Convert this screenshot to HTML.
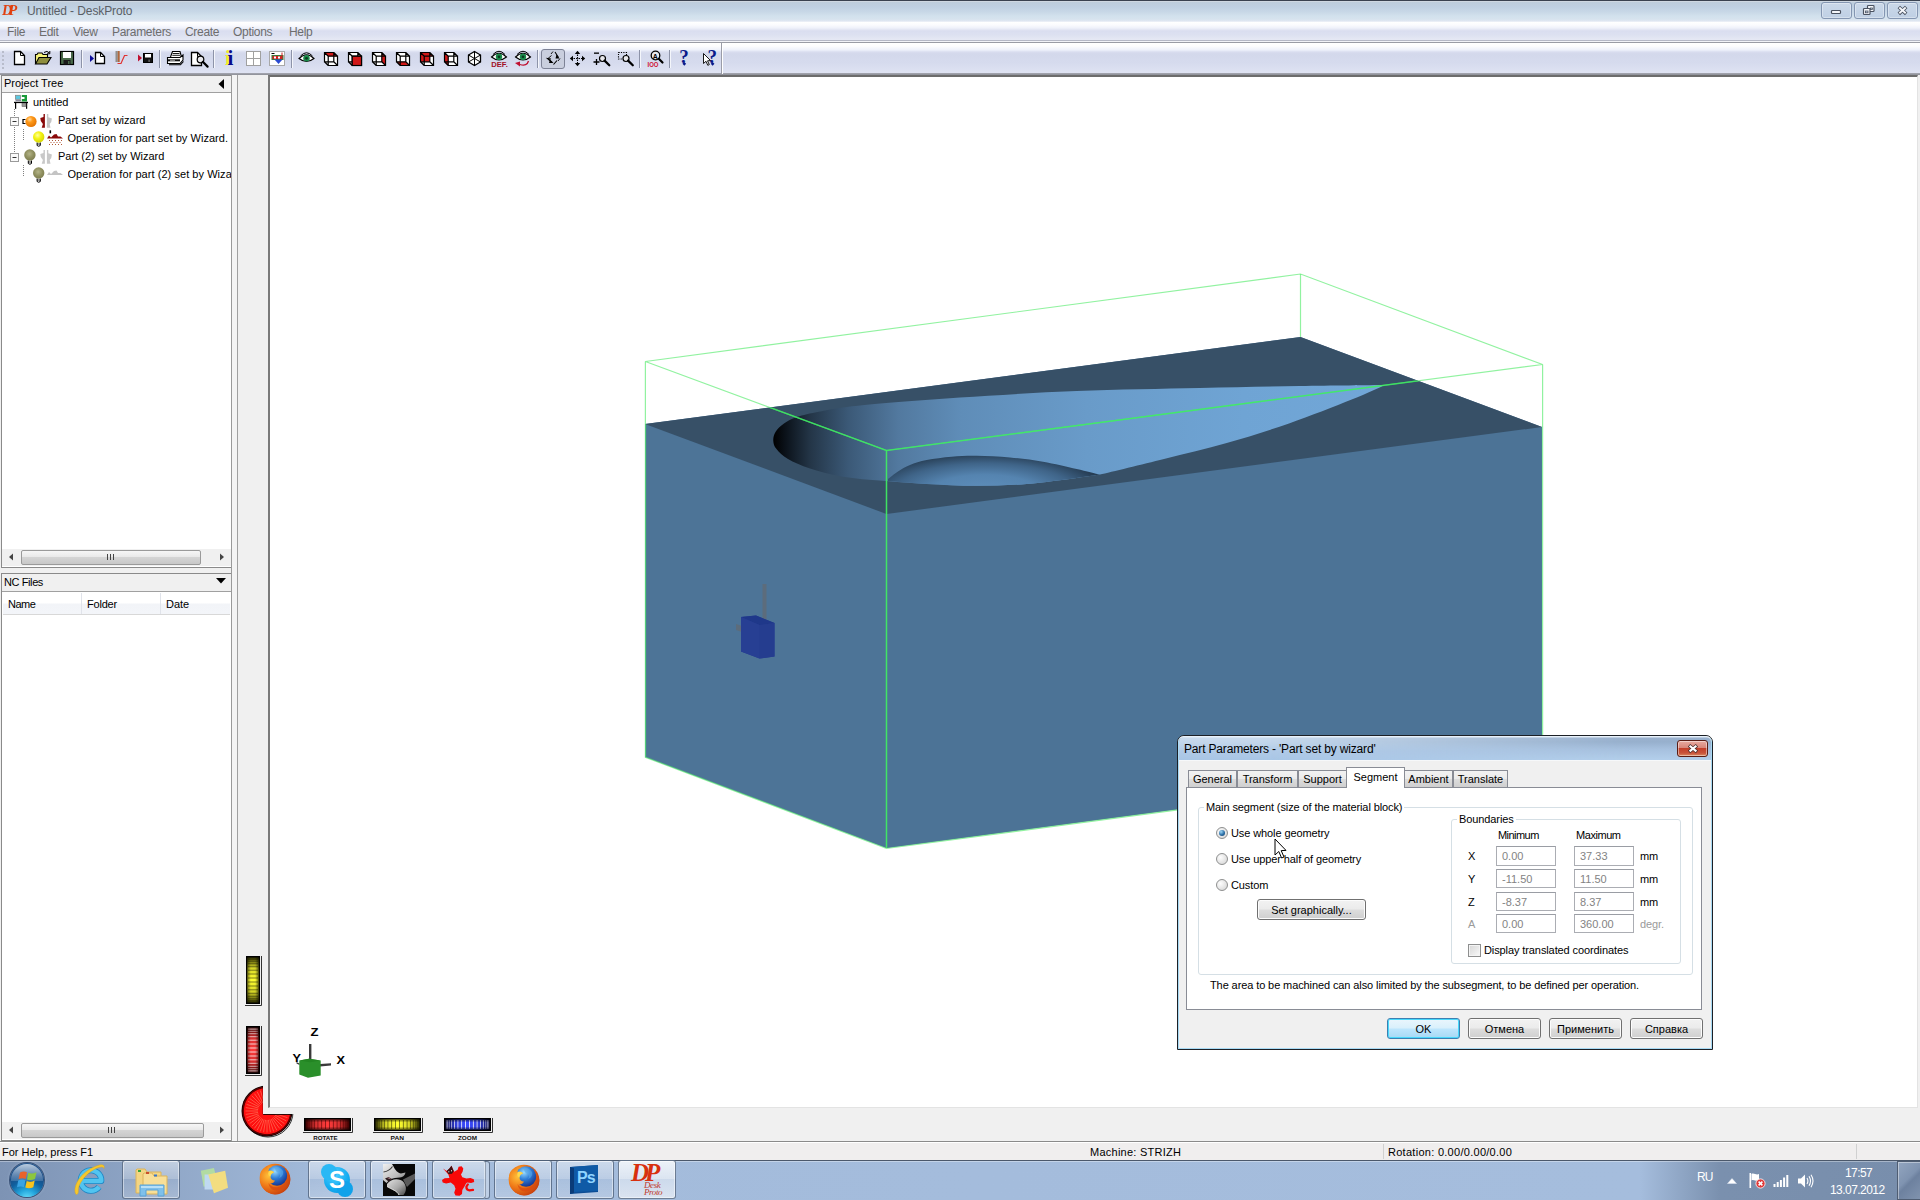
<!DOCTYPE html>
<html>
<head>
<meta charset="utf-8">
<title>Untitled - DeskProto</title>
<style>
html,body{margin:0;padding:0;}
body{width:1920px;height:1200px;position:relative;overflow:hidden;background:#f0f0f0;font-family:"Liberation Sans",sans-serif;font-size:11px;color:#000;}
.a{position:absolute;}
.t{position:absolute;white-space:nowrap;line-height:1;}
#titlebar{left:0;top:0;width:1920px;height:22px;background:linear-gradient(#3a4250 0,#3a4250 1px,#cfd8e2 1px,#cfd8e2 2px,#becddc 2px,#bfd0e2 7px,#c8d8e7 12px,#d2e1ed 16px,#d6e3ee 19px,#e0e6f1 21px,#f4f6fb 22px);}
#menubar{left:0;top:22px;width:1920px;height:21px;background:linear-gradient(#ffffff 0,#fbfbfe 3px,#eff1fa 6px,#e0e3f2 8px,#dadef0 9px,#dde1f1 13px,#e6e9f4 18px,#b5b8c6 18px,#b5b8c6 19px,#f2f3f8 19px,#f2f3f8 20px,#9a9ca5 20px,#9a9ca5 21px);}
#toolbar{left:0;top:43px;width:1920px;height:32px;background:linear-gradient(#ffffff 0,#fdfdfe 3px,#eef1fb 7px,#d9ddef 9px,#d3d8eb 11px,#d6dbee 20px,#dfe3f3 30px,#a6a8b2 30px,#8c8e96 32px);}
.menu{top:26px;font-size:12px;color:#6d6d6d;letter-spacing:-0.3px;}
#statusbar{left:0;top:1142px;width:1920px;height:18px;background:#f0eeee;}
#taskbar{left:0;top:1160px;width:1920px;height:40px;background:linear-gradient(90deg,#7d93b4 0,#a3bbdb 330px,#a5bddd 1640px,#7a90ae 1720px,#788eac 1920px);}
.sbthumb{border:1px solid #9a9a9a;border-radius:2px;background:linear-gradient(#f6f6f6 0,#e9e9e9 45%,#d4d4d4 50%,#c8c8c8 100%);}
.grip{width:7px;height:6px;background:linear-gradient(90deg,#444 0,#444 1px,transparent 1px,transparent 3px,#444 3px,#444 4px,transparent 4px,transparent 6px,#444 6px,#444 7px);}
.tab{position:absolute;top:34px;height:17px;box-sizing:border-box;border:1px solid #898c95;border-bottom:none;background:linear-gradient(#f2f2f2 0,#ebebeb 50%,#dddddd 50%,#cfcfcf 100%);text-align:center;line-height:16px;white-space:nowrap;}
.tab.sel{top:31px;height:21px;background:#fff;line-height:18px;}
.grp{position:absolute;box-sizing:border-box;border:1px solid #d5dfe5;border-radius:3px;}
.radio{position:absolute;width:12px;height:12px;box-sizing:border-box;border:1px solid #8e8f8f;border-radius:50%;background:radial-gradient(circle at 35% 35%,#fdfdfd 0,#e3e3e3 60%,#cfcfcf 100%);}
.radio i{position:absolute;left:2px;top:2px;width:6px;height:6px;border-radius:50%;background:radial-gradient(circle at 35% 30%,#9fd7f7 0,#2a6ea6 55%,#123d66 100%);}
.btn{position:absolute;box-sizing:border-box;border:1px solid #707070;border-radius:3px;background:linear-gradient(#f2f2f2 0,#ebebeb 48%,#dddddd 52%,#cfcfcf 100%);box-shadow:inset 0 0 0 1px #fcfcfc;text-align:center;white-space:nowrap;}
.btn{line-height:20px;}
#dlg .t{letter-spacing:-0.1px;}
.btn.def{border-color:#3c7fb1;box-shadow:inset 0 0 0 1px #48d8fb;background:linear-gradient(#eaf6fd 0,#d9f0fc 48%,#bee6fd 52%,#a7d9f5 100%);}
.inp{position:absolute;width:60px;height:20px;box-sizing:border-box;border:1px solid #abadb3;border-top-color:#9a9da4;background:#fff;color:#838383;line-height:18px;padding-left:5px;}
.tbb{position:absolute;top:1160px;height:39px;box-sizing:border-box;border:1px solid rgba(70,88,115,.75);border-radius:3px;background:linear-gradient(rgba(255,255,255,.45) 0,rgba(255,255,255,.25) 50%,rgba(255,255,255,.08) 50%,rgba(255,255,255,.2) 100%);box-shadow:inset 0 0 0 1px rgba(255,255,255,.45);}
.tbb.act{background:linear-gradient(rgba(255,255,255,.8) 0,rgba(255,255,255,.6) 50%,rgba(255,255,255,.45) 50%,rgba(255,255,255,.6) 100%);}
.wbtn{position:absolute;top:2px;width:31px;height:17px;box-sizing:border-box;border:1px solid #8496b2;border-radius:3px;background:linear-gradient(#cbd8e9,#bfd0e4);box-shadow:inset 0 0 0 1px rgba(255,255,255,.35);}
</style>
</head>
<body>
<div id="titlebar" class="a"></div>
<div class="t" style="left:27px;top:5px;font-size:12px;color:#5a5f66;letter-spacing:-0.1px;">Untitled - DeskProto</div>
<div class="wbtn" style="left:1821px;"></div><div class="wbtn" style="left:1854px;"></div><div class="wbtn" style="left:1887px;"></div>
<svg class="a" style="left:1821px;top:2px;" width="100" height="17" viewBox="1821 2 100 17">
<rect x="1831.500" y="10.500" width="9" height="3" rx=".8" fill="#f4f6fa" stroke="#4a5260" stroke-width="1.200"/>
<rect x="1867.500" y="5.500" width="6.500" height="6" rx=".8" fill="#f4f6fa" stroke="#4a5260" stroke-width="1.200"/><rect x="1870.500" y="8" width="2" height="1.500" fill="#c4d3e6" stroke="#4a5260" stroke-width=".8"/>
<rect x="1863.500" y="8.500" width="6.500" height="6" rx=".8" fill="#f4f6fa" stroke="#4a5260" stroke-width="1.200"/><rect x="1865.500" y="11" width="2.500" height="1.800" fill="#c4d3e6" stroke="#4a5260" stroke-width=".8"/>
<path d="M1898.800 7 L1906.200 13.800 M1906.200 7 L1898.800 13.800" stroke="#4a5260" stroke-width="3.600" stroke-linecap="butt"/><path d="M1899.300 7.500 L1905.700 13.300 M1905.700 7.500 L1899.300 13.300" stroke="#f4f6fa" stroke-width="1.900" stroke-linecap="butt"/>
</svg>
<div class="t" style="left:2px;top:3px;font-family:'Liberation Serif',serif;font-style:italic;font-weight:bold;font-size:15px;color:#e0400f;letter-spacing:-4px;transform:scaleX(.95);transform-origin:left;">DP</div>
<div id="menubar" class="a"></div>
<div class="t menu" style="left:7px;">File</div>
<div class="t menu" style="left:39px;">Edit</div>
<div class="t menu" style="left:73px;">View</div>
<div class="t menu" style="left:112px;">Parameters</div>
<div class="t menu" style="left:185px;">Create</div>
<div class="t menu" style="left:233px;">Options</div>
<div class="t menu" style="left:289px;">Help</div>
<div id="toolbar" class="a"></div>
<svg class="a" style="left:0;top:42px;" width="1920" height="33" viewBox="0 42 1920 33"><rect x="721" y="43" width="1" height="31" fill="#9a9ca8"/><rect x="722" y="43" width="1" height="31" fill="#fff"/><rect x="2" y="51" width="2" height="2" fill="#b8bccb"/><rect x="2" y="55" width="2" height="2" fill="#b8bccb"/><rect x="2" y="59" width="2" height="2" fill="#b8bccb"/><rect x="2" y="63" width="2" height="2" fill="#b8bccb"/><rect x="2" y="67" width="2" height="2" fill="#b8bccb"/><path d="M14.5 51.5 H20.5 L24.5 55.5 V64.5 H14.5 Z" fill="#fff" stroke="#000" stroke-width="1.3"/><path d="M20.5 51.5 V55.5 H24.5" fill="none" stroke="#000" stroke-width="1"/><path d="M35.5 64 V54.5 H37 L38 53 H42 L43 54.5 H47.5 V57" fill="#f6f27a" stroke="#000" stroke-width="1.1"/><path d="M35.5 64 L39 57.5 H51 L47 64 Z" fill="#8e8e3e" stroke="#000" stroke-width="1.1"/><path d="M44 52.5 Q47 50 49.5 53 M49.8 51 V53.8 H47" fill="none" stroke="#000" stroke-width="1"/><rect x="60.5" y="51.5" width="13" height="13" fill="#4a6a4a" stroke="#000" stroke-width="1.2"/><rect x="63" y="52" width="8" height="6" fill="#fff"/><rect x="63.5" y="60" width="7" height="4.5" fill="#1a1a1a"/><rect x="68" y="61" width="1.5" height="3" fill="#4a6a4a"/><rect x="81" y="50" width="1" height="18" fill="#8d93a8"/><rect x="82" y="50" width="1" height="18" fill="#f4f6fb"/><polygon points="90,55 94,58.5 90,62" fill="#0a0a9a"/><path d="M95.5 52.5 H100.5 L104.5 56.5 V63.5 H95.5 Z" fill="#fff" stroke="#000" stroke-width="1.3"/><path d="M100.5 52.5 V56.5 H104.5" fill="none" stroke="#000" stroke-width="1"/><rect x="115.5" y="51" width="2.2" height="11" fill="#8e8e8e"/><rect x="117.7" y="51" width="2" height="11" fill="#b0663a"/><path d="M117.5 63.5 H121 L124.5 55.5 H127.5" fill="none" stroke="#e03030" stroke-width="1.2"/><polygon points="138,54.5 142,58 138,61.5" fill="#c01030"/><rect x="143.5" y="53.5" width="9" height="9" fill="#111" stroke="#000" stroke-width="1"/><rect x="145" y="54" width="6" height="3.5" fill="#fff"/><rect x="148.500" y="59.5" width="1.2" height="2.5" fill="#777"/><rect x="159" y="50" width="1" height="18" fill="#8d93a8"/><rect x="160" y="50" width="1" height="18" fill="#f4f6fb"/><path d="M170.500 57 L172.500 51.500 H180 L181.500 57" fill="#fff" stroke="#000" stroke-width="1.1"/><path d="M172.700 53.500 H179.500 M172.300 55.300 H180" stroke="#000" stroke-width=".9"/><path d="M167.500 57.500 H180 L183 55 V60 L180 63.500 H167.500 Z" fill="#fff" stroke="#000" stroke-width="1.1"/><rect x="167.500" y="59.300" width="12.5" height="2" fill="#111"/><path d="M169 64.800 H180.500 L183.500 61.500" fill="none" stroke="#000" stroke-width="1.1"/><rect x="170" y="59.800" width="5" height=".8" fill="#ccc"/><path d="M191.5 52.5 H197.5 L201.5 56.5 V65.5 H191.5 Z" fill="#fff" stroke="#000" stroke-width="1.3"/><path d="M197.5 52.5 V56.5 H201.5" fill="none" stroke="#000" stroke-width="1"/><circle cx="200.5" cy="59.5" r="3.3" fill="#e8e8ec" stroke="#000" stroke-width="1.2"/><path d="M202.81 61.81 L207.60000000000002 66.6" stroke="#000" stroke-width="2.2" stroke-linecap="round"/><rect x="213" y="50" width="1" height="18" fill="#8d93a8"/><rect x="214" y="50" width="1" height="18" fill="#f4f6fb"/><text x="225" y="65.300" font-family="Liberation Serif, serif" font-weight="bold" font-size="21" fill="#f5f020">i</text><text x="227.600" y="65.300" font-family="Liberation Serif, serif" font-weight="bold" font-size="21" fill="#0a0a8a">i</text><rect x="246.500" y="51.500" width="14" height="14" fill="#fff" stroke="#a0a0a0" stroke-width="1"/><path d="M253.500 51.500 V65.500 M246.500 58.500 H260.500" stroke="#a0a0a0" stroke-width="1"/><rect x="269.500" y="51.500" width="15" height="14" fill="#fff" stroke="#a8a8a8" stroke-width="1"/><rect x="271.500" y="53" width="3" height="1" fill="#000"/><rect x="272" y="55.500" width="11" height="4" fill="#d02020" stroke="#3a7a3a" stroke-width="1"/><polygon points="274.500,59.500 282.500,59.500 278.500,64" fill="#2a4ad0"/><rect x="281.500" y="52.500" width="1" height="4" fill="#d02020"/><rect x="274" y="56.500" width="2" height="2" fill="#fff"/><rect x="278" y="56.500" width="2" height="2" fill="#fff"/><rect x="291" y="50" width="1" height="18" fill="#8d93a8"/><rect x="292" y="50" width="1" height="18" fill="#f4f6fb"/><g transform="translate(299 53.5)"><path d="M0 5 Q7.5 -2.5 15 5 Q7.5 11 0 5 Z" fill="#fff" stroke="#000" stroke-width="1.1"/><path d="M1.5 2.5 Q7.5 -4 13.5 2.5" fill="none" stroke="#000" stroke-width="1"/><circle cx="7.5" cy="4.8" r="3.2" fill="#1a8a4a"/><circle cx="7.5" cy="4.8" r="1.4" fill="#0a3a1e"/></g><g transform="translate(324.5 52.5) scale(.93)"><polygon points="0,0 10,0 14,4 14,14 4,14 0,10" fill="#fff"/><polygon points="0,0 10,0 14,4 4,4" fill="#d01818"/><path d="M0 0 H10 V10 H0 Z M4 4 H14 V14 H4 Z M0 0 L4 4 M10 0 L14 4 M10 10 L14 14 M0 10 L4 14" fill="none" stroke="#000" stroke-width="1.3"/></g><g transform="translate(348.5 52.5) scale(.93)"><polygon points="0,0 10,0 14,4 14,14 4,14 0,10" fill="#fff"/><polygon points="4,4 14,4 14,14 4,14" fill="#d01818"/><path d="M0 0 H10 V10 H0 Z M4 4 H14 V14 H4 Z M0 0 L4 4 M10 0 L14 4 M10 10 L14 14 M0 10 L4 14" fill="none" stroke="#000" stroke-width="1.3"/><rect x="4" y="4" width="10" height="10" fill="#d01818" stroke="#000" stroke-width="1.3"/></g><g transform="translate(372.5 52.5) scale(.93)"><polygon points="0,0 10,0 14,4 14,14 4,14 0,10" fill="#fff"/><polygon points="10,0 14,4 14,14 10,10" fill="#d01818"/><path d="M0 0 H10 V10 H0 Z M4 4 H14 V14 H4 Z M0 0 L4 4 M10 0 L14 4 M10 10 L14 14 M0 10 L4 14" fill="none" stroke="#000" stroke-width="1.3"/></g><g transform="translate(396.5 52.5) scale(.93)"><polygon points="0,0 10,0 14,4 14,14 4,14 0,10" fill="#fff"/><polygon points="0,10 10,10 14,14 4,14" fill="#d01818"/><path d="M0 0 H10 V10 H0 Z M4 4 H14 V14 H4 Z M0 0 L4 4 M10 0 L14 4 M10 10 L14 14 M0 10 L4 14" fill="none" stroke="#000" stroke-width="1.3"/></g><g transform="translate(420.5 52.5) scale(.93)"><polygon points="0,0 10,0 14,4 14,14 4,14 0,10" fill="#fff"/><polygon points="0,0 10,0 10,10 0,10" fill="#d01818"/><polygon points="0,0 10,0 14,4 4,4" fill="#d01818"/><path d="M0 0 H10 V10 H0 Z M4 4 H14 V14 H4 Z M0 0 L4 4 M10 0 L14 4 M10 10 L14 14 M0 10 L4 14" fill="none" stroke="#000" stroke-width="1.3"/></g><g transform="translate(444.5 52.5) scale(.93)"><polygon points="0,0 10,0 14,4 14,14 4,14 0,10" fill="#fff"/><polygon points="0,0 4,4 4,14 0,10" fill="#d01818"/><path d="M0 0 H10 V10 H0 Z M4 4 H14 V14 H4 Z M0 0 L4 4 M10 0 L14 4 M10 10 L14 14 M0 10 L4 14" fill="none" stroke="#000" stroke-width="1.3"/></g><polygon points="474.500,51.500 480.500,55 480.500,62 474.500,65.500 468.500,62 468.500,55" fill="#fff" stroke="#000" stroke-width="1.3"/><path d="M474.500 51.500 V65.500 M468.500 55 L480.500 62 M480.500 55 L468.500 62" stroke="#000" stroke-width="1"/><g transform="translate(491.5 52)"><path d="M0 5 Q7.5 -2.5 15 5 Q7.5 11 0 5 Z" fill="#fff" stroke="#000" stroke-width="1.1"/><path d="M1.5 2.5 Q7.5 -4 13.5 2.5" fill="none" stroke="#000" stroke-width="1"/><circle cx="7.5" cy="4.8" r="3.2" fill="#1a8a4a"/><circle cx="7.5" cy="4.8" r="1.4" fill="#0a3a1e"/></g><text x="491.300" y="66.800" font-family="Liberation Sans, sans-serif" font-weight="bold" font-size="7.5" fill="#a01028" textLength="16.500" lengthAdjust="spacingAndGlyphs">DEF.</text><g transform="translate(515.5 52)"><path d="M0 5 Q7.5 -2.5 15 5 Q7.5 11 0 5 Z" fill="#fff" stroke="#000" stroke-width="1.1"/><path d="M1.5 2.5 Q7.5 -4 13.5 2.5" fill="none" stroke="#000" stroke-width="1"/><circle cx="7.5" cy="4.8" r="3.2" fill="#1a8a4a"/><circle cx="7.5" cy="4.8" r="1.4" fill="#0a3a1e"/></g><path d="M520 64.500 Q527 66.500 528.500 61" fill="none" stroke="#c01030" stroke-width="1.3"/><polygon points="515,63 520,61.500 520,66.500" fill="#c01030"/><rect x="537" y="50" width="1" height="18" fill="#8d93a8"/><rect x="538" y="50" width="1" height="18" fill="#f4f6fb"/><rect x="541.500" y="49.500" width="23" height="19" rx="2.500" fill="#c9cede" stroke="#7d8296" stroke-width="1"/><path d="M555 52 L558.500 57.500 M551 59 L547.500 58.500 L552 62.500 M553.500 64.500 L557 60.500" fill="none" stroke="#000" stroke-width="1.1"/><polygon points="556.500,54.500 559.500,58.500 555.500,58.500" fill="#000"/><polygon points="550,59.500 553.500,63 549,63" fill="#000"/><path d="M553 51.500 L551 54 M548 58.500 L551.500 55.500 M558 61 L560 58.500" stroke="#000" stroke-width=".9"/><path d="M577.500 52 V65 M571 58.500 H584" stroke="#000" stroke-width="1.1" stroke-dasharray="1.5 1"/><polygon points="577.500,50.800 580.200,54 574.800,54" fill="#000"/><polygon points="577.500,66.200 580.200,63 574.800,63" fill="#000"/><polygon points="569.800,58.500 573,55.800 573,61.200" fill="#000"/><polygon points="585.200,58.500 582,55.800 582,61.200" fill="#000"/><rect x="594" y="52.500" width="5" height="1.300" fill="#000"/><path d="M593.500 62 H599.500 M596.500 59 V65" stroke="#000" stroke-width="1.3"/><circle cx="602.5" cy="58.5" r="3" fill="#e8e8ec" stroke="#000" stroke-width="1.2"/><path d="M604.6 60.6 L609.3 65.3" stroke="#000" stroke-width="2.2" stroke-linecap="round"/><rect x="618.500" y="52.500" width="8" height="6.500" fill="none" stroke="#000" stroke-width="1.1" stroke-dasharray="1.2 1.2"/><circle cx="626" cy="58.5" r="3" fill="#e8e8ec" stroke="#000" stroke-width="1.2"/><path d="M628.1 60.6 L632.8 65.3" stroke="#000" stroke-width="2.2" stroke-linecap="round"/><rect x="639" y="50" width="1" height="18" fill="#8d93a8"/><rect x="640" y="50" width="1" height="18" fill="#f4f6fb"/><circle cx="655.500" cy="55.500" r="4.300" fill="#e8e8ec" stroke="#000" stroke-width="1.300"/><path d="M658.800 58.800 L662.500 62.500" stroke="#000" stroke-width="2.200" stroke-linecap="round"/><text x="652.800" y="58.500" font-family="Liberation Sans, sans-serif" font-weight="bold" font-size="7" fill="#000">A</text><text x="647.500" y="66.500" font-family="Liberation Sans, sans-serif" font-size="7.500" fill="#d01030" font-weight="bold" textLength="11" lengthAdjust="spacingAndGlyphs">IOO</text><rect x="669" y="50" width="1" height="18" fill="#8d93a8"/><rect x="670" y="50" width="1" height="18" fill="#f4f6fb"/><text x="679.300" y="63" font-family="Liberation Serif, serif" font-weight="bold" font-size="19" fill="#0a1a8a">?</text><rect x="683" y="62.500" width="2.600" height="2.600" fill="#0a1a8a" transform="rotate(45 684.300 63.800)"/><text x="707.500" y="63" font-family="Liberation Serif, serif" font-weight="bold" font-size="19" fill="#0a1a8a">?</text><rect x="711.300" y="62.500" width="2.600" height="2.600" fill="#0a1a8a" transform="rotate(45 712.600 63.800)"/><path d="M703.500 53.500 V63.500 L706 61.300 L707.800 65.300 L709.300 64.600 L707.500 60.800 L710.500 60.500 Z" fill="#fff" stroke="#000" stroke-width=".9"/></svg>
<div class="a" style="left:0;top:75px;width:232px;height:1066px;background:#f0f0f0;"></div>
<div class="a" style="left:1px;top:75px;width:229px;height:491px;border:1px solid #8a8a8a;background:#fff;"></div>
<div class="a" style="left:2px;top:76px;width:229px;height:16px;background:#f0f0f0;border-bottom:1px solid #a0a0a0;"></div>
<div class="t" style="left:4px;top:78px;">Project Tree</div>
<svg class="a" style="left:216px;top:78px;" width="10" height="12"><path d="M8 1 L8 11 L2.5 6 Z" fill="#000"/></svg>
<div class="a" style="left:2px;top:549px;width:229px;height:17px;background:#f0f0f0;"></div>
<div class="a sbthumb" style="left:21px;top:550px;width:178px;height:13px;"></div>
<svg class="a" style="left:8px;top:553px;" width="6" height="8"><path d="M5 0.5 L5 7.5 L1 4 Z" fill="#444"/></svg>
<svg class="a" style="left:219px;top:553px;" width="6" height="8"><path d="M1 0.5 L1 7.5 L5 4 Z" fill="#444"/></svg>
<div class="a grip" style="left:107px;top:554px;"></div>
<div class="a" style="left:1px;top:573px;width:229px;height:566px;border:1px solid #8a8a8a;background:#fff;"></div>
<div class="a" style="left:2px;top:574px;width:229px;height:17px;background:#f0f0f0;border-bottom:1px solid #a0a0a0;"></div>
<div class="t" style="left:4px;top:577px;letter-spacing:-0.4px;">NC Files</div>
<svg class="a" style="left:215px;top:577px;" width="12" height="8"><path d="M1 1 L11 1 L6 6.5 Z" fill="#000"/></svg>
<div class="a" style="left:3px;top:593px;width:227px;height:21px;background:linear-gradient(#fff 0,#fff 10px,#f2f4f8 11px,#f3f5f9 21px);border-bottom:1px solid #d8d8d8;"></div>
<div class="a" style="left:81px;top:593px;width:1px;height:21px;background:#e0e3ea;"></div>
<div class="a" style="left:160px;top:593px;width:1px;height:21px;background:#e0e3ea;"></div>
<div class="t" style="left:8px;top:599px;letter-spacing:-0.5px;">Name</div>
<div class="t" style="left:87px;top:599px;letter-spacing:-0.2px;">Folder</div>
<div class="t" style="left:166px;top:599px;">Date</div>
<div class="a" style="left:2px;top:1122px;width:229px;height:17px;background:#f0f0f0;"></div>
<div class="a sbthumb" style="left:21px;top:1123px;width:181px;height:13px;"></div>
<svg class="a" style="left:8px;top:1126px;" width="6" height="8"><path d="M5 0.5 L5 7.5 L1 4 Z" fill="#444"/></svg>
<svg class="a" style="left:219px;top:1126px;" width="6" height="8"><path d="M1 0.5 L1 7.5 L5 4 Z" fill="#444"/></svg>
<div class="a grip" style="left:108px;top:1127px;"></div>
<!-- tree -->
<div class="t" style="left:33px;top:97px;">untitled</div>
<div class="t" style="left:58px;top:115px;">Part set by wizard</div>
<div class="t" style="left:67.5px;top:133px;letter-spacing:.05px;">Operation for part set by Wizard.</div>
<div class="t" style="left:58px;top:151px;">Part (2) set by Wizard</div>
<div class="t" style="left:67.5px;top:169px;width:163px;overflow:hidden;letter-spacing:.05px;">Operation for part (2) set by Wizard.</div>
<svg class="a" style="left:0;top:93px;" width="80" height="100" viewBox="0 93 80 100"><defs><radialGradient id="gor" cx=".38" cy=".32" r=".75"><stop offset="0" stop-color="#ffd9a0"/><stop offset=".35" stop-color="#ff9a1a"/><stop offset="1" stop-color="#e07000"/></radialGradient><radialGradient id="gye" cx=".4" cy=".35" r=".75"><stop offset="0" stop-color="#ffffa0"/><stop offset=".4" stop-color="#f4f416"/><stop offset="1" stop-color="#d0d000"/></radialGradient><radialGradient id="gol" cx=".45" cy=".4" r=".75"><stop offset="0" stop-color="#b4b488"/><stop offset=".5" stop-color="#8e8e5e"/><stop offset="1" stop-color="#76764a"/></radialGradient></defs><path d="M14.500 109 V153 M23.500 129 V141 M23.500 165 V177" stroke="#808080" stroke-width="1" stroke-dasharray="1 1"/><rect x="14" y="101.800" width="14" height="1.300" fill="#000"/><rect x="15" y="102" width="1.200" height="6.800" fill="#000"/><rect x="26" y="102" width="1.200" height="6.800" fill="#000"/><rect x="15.500" y="95.300" width="5" height="4" fill="#5ac8e0" stroke="#888" stroke-width=".8"/><rect x="15.500" y="99.800" width="5.500" height="1.500" fill="#8a8a9a"/><path d="M21.800 95 H27 V101.500 H21.800 V99 H24.500 V97 H21.800 Z" fill="#1a9a3a"/><rect x="22" y="103.500" width="4" height="3" fill="#9a9a9a" stroke="#666" stroke-width=".6"/><rect x="10.500" y="117.5" width="8" height="8" fill="#fafafa" stroke="#9a9a9a" stroke-width="1"/><rect x="12.500" y="121.0" width="4" height="1" fill="#333"/><rect x="10.500" y="153.5" width="8" height="8" fill="#fafafa" stroke="#9a9a9a" stroke-width="1"/><rect x="12.500" y="157.0" width="4" height="1" fill="#333"/><path d="M25.500 119.500 H23 V123.500 H25.500" fill="none" stroke="#000" stroke-width="1.200"/><circle cx="31" cy="121.500" r="5.600" fill="url(#gor)"/><path d="M43.5 114 H44.9 V127.7 H41.699999999999996 L42.9 124 Q40.0 121 40.3 118 L43.5 117 Z" fill="#8a0a0a"/><path d="M46.9 114 H48.3 V117.2 L51.9 118.6 Q51.9 122 49.699999999999996 124 L50.5 127.7 H46.9 Z" fill="#c4c4c4"/><circle cx="38.7" cy="137" r="5.7" fill="url(#gye)"/><path d="M37.1 142.6 V145.5 Q38.7 147 40.300000000000004 145.5 V142.6" fill="none" stroke="#000" stroke-width="1"/><path d="M37.1 144 H40.300000000000004" stroke="#000" stroke-width=".8"/><rect x="49.500" y="130.300" width="1.600" height="3" fill="#000"/><path d="M47 138.5 L49 135.5 L51 137.5 L54 134.5 L56.5 134.0 L58 136.5 L60.5 136.5 L63 138.5 Z" fill="#8a0a0a"/><rect x="49" y="140" width="1" height="1" fill="#b05a3a"/><rect x="52" y="140" width="1" height="1" fill="#b05a3a"/><rect x="55" y="140" width="1" height="1" fill="#b05a3a"/><rect x="58" y="140" width="1" height="1" fill="#b05a3a"/><rect x="61" y="140" width="1" height="1" fill="#b05a3a"/><rect x="50.5" y="142" width="1" height="1" fill="#b05a3a"/><rect x="53.5" y="142" width="1" height="1" fill="#b05a3a"/><rect x="56.5" y="142" width="1" height="1" fill="#b05a3a"/><rect x="59.5" y="142" width="1" height="1" fill="#b05a3a"/><rect x="49" y="144" width="1" height="1" fill="#b05a3a"/><rect x="52" y="144" width="1" height="1" fill="#b05a3a"/><rect x="55" y="144" width="1" height="1" fill="#b05a3a"/><rect x="58" y="144" width="1" height="1" fill="#b05a3a"/><rect x="61" y="144" width="1" height="1" fill="#b05a3a"/><circle cx="29.9" cy="155" r="5.7" fill="url(#gol)"/><path d="M28.299999999999997 160.6 V163.5 Q29.9 165 31.5 163.5 V160.6" fill="none" stroke="#000" stroke-width="1"/><path d="M28.299999999999997 162 H31.5" stroke="#000" stroke-width=".8"/><path d="M43.5 150 H44.9 V163.7 H41.699999999999996 L42.9 160 Q40.0 157 40.3 154 L43.5 153 Z" fill="#c8c8c8"/><path d="M46.9 150 H48.3 V153.2 L51.9 154.6 Q51.9 158 49.699999999999996 160 L50.5 163.7 H46.9 Z" fill="#c8c8c8"/><circle cx="38.7" cy="173" r="5.7" fill="url(#gol)"/><path d="M37.1 178.6 V181.5 Q38.7 183 40.300000000000004 181.5 V178.6" fill="none" stroke="#000" stroke-width="1"/><path d="M37.1 180 H40.300000000000004" stroke="#000" stroke-width=".8"/><path d="M47 175 L49 172 L51 174 L54 171 L56.5 170.5 L58 173 L60.5 173 L63 175 Z" fill="#c4c4c4"/></svg>

<div class="a" style="left:232px;top:75px;width:1688px;height:1066px;background:#f0f0f0;"></div>
<div class="a" style="left:231px;top:75px;width:1px;height:1066px;background:#9a9a9a;"></div>
<div class="a" style="left:232px;top:75px;width:5px;height:1066px;background:#f4f4f4;"></div>
<div class="a" style="left:237px;top:75px;width:1px;height:1066px;background:#a0a0a0;"></div>
<div class="a" style="left:268px;top:75px;width:1650px;height:1033px;background:#fff;border-left:2px solid #7a7a7a;border-top:2px solid #6c6c6c;border-right:1px solid #e3e3e3;border-bottom:1px solid #e3e3e3;box-sizing:border-box;"></div>
<svg class="a" style="left:232px;top:75px;" width="1688" height="1066" viewBox="232 75 1688 1066">
<defs>
<linearGradient id="gcav" gradientUnits="userSpaceOnUse" x1="773" y1="0" x2="1400" y2="0">
<stop offset="0" stop-color="#000000"/><stop offset="0.02" stop-color="#0b121a"/><stop offset="0.06" stop-color="#243648"/><stop offset="0.12" stop-color="#3b5977"/><stop offset="0.2" stop-color="#52799f"/><stop offset="0.3" stop-color="#5f8db8"/><stop offset="0.5" stop-color="#699bc9"/><stop offset="0.75" stop-color="#6fa4d4"/><stop offset="1" stop-color="#72a7d8"/>
</linearGradient>
<radialGradient id="gbump" gradientUnits="userSpaceOnUse" cx="985" cy="492" r="120" gradientTransform="translate(985 492) scale(1 0.32) translate(-985 -492)">
<stop offset="0" stop-color="#5f8fbc"/><stop offset="0.45" stop-color="#5584b0"/><stop offset="0.75" stop-color="#3f6488"/><stop offset="1" stop-color="#273e55"/>
</radialGradient>
</defs>
<!-- box faces -->
<polygon points="645,424 1300.5,337 1542,427 1542,761 886.5,848 645,757" fill="#4c7396"/>
<polygon points="645,424 886.5,514 886.5,848 645,757" fill="#4d7497"/>
<polygon points="886.5,514 1542,427 1542,761 886.5,848" fill="#4c7396"/>
<polygon points="645,424 1300.5,337 1542,427 886.5,514" fill="#375067"/>
<path d="M1385 385 C1379.5 387.4 1367.7 393.2 1351.7 399.6 C1335.7 406.0 1309.8 416.3 1289.0 423.5 C1268.2 430.7 1247.5 437.1 1226.7 443.0 C1205.9 448.9 1185.1 453.7 1164.0 459.0 C1142.9 464.3 1110.7 472.0 1100.0 474.6 C1096.1 475.2 1088.9 476.4 1076.7 478.0 C1064.5 479.6 1043.4 482.7 1026.7 484.0 C1010.0 485.3 993.4 485.8 976.7 485.8 C960.0 485.8 942.3 484.8 926.7 484.0 C911.1 483.2 897.0 482.0 883.0 480.8 C869.0 479.6 855.2 478.8 843.0 476.7 C830.8 474.6 819.2 471.4 810.0 468.5 C800.8 465.6 793.6 462.2 788.0 459.0 C782.4 455.8 779.0 452.0 776.5 449.0 C774.0 446.0 773.5 443.8 773.3 441.0 C773.1 438.2 773.7 434.9 775.5 432.0 C777.3 429.1 780.4 426.0 784.0 423.5 C787.6 421.0 791.0 419.0 797.0 417.0 C803.0 415.0 809.5 413.4 820.0 411.5 C830.5 409.6 836.7 407.8 860.0 405.5 C883.3 403.2 923.9 399.9 960.0 397.5 C996.1 395.1 1036.7 392.6 1076.7 391.0 C1116.7 389.4 1162.8 388.8 1200.0 388.0 C1237.2 387.2 1269.2 386.5 1300.0 386.0 C1330.8 385.5 1370.8 385.2 1385.0 385.0 Z" fill="url(#gcav)"/>
<path d="M888 479 C889.7 477.8 894.3 473.8 898.0 471.5 C901.7 469.2 905.2 466.9 910.0 465.0 C914.8 463.1 919.8 461.4 926.7 460.0 C933.7 458.6 943.4 457.4 951.7 456.7 C960.0 456.0 967.0 455.7 976.7 455.8 C986.4 455.9 999.0 456.5 1010.0 457.5 C1021.0 458.5 1031.9 459.8 1043.0 461.7 C1054.1 463.6 1067.2 466.9 1076.7 469.0 C1086.2 471.1 1096.1 473.7 1100.0 474.6 C1096.1 475.2 1088.9 476.4 1076.7 478.0 C1064.5 479.6 1043.4 482.7 1026.7 484.0 C1010.0 485.3 993.4 485.8 976.7 485.8 C960.0 485.8 941.5 484.8 926.7 484.0 C911.9 483.2 894.5 481.5 888.0 481.0 Z" fill="url(#gbump)"/>
<!-- green wireframe -->
<g fill="none" stroke="#62ec78" stroke-width="1.2" stroke-opacity="0.7">
<polygon points="645.4,361.5 1300.5,274 1542.6,364.5 886.5,450.5"/>
<path d="M645.4 361.5 V757.3 L886.5 848.5 L1542.6 761.4 V364.5 M886.5 450.5 V848 M1300.5 274 V337"/>
</g>
<clipPath id="boxclip"><polygon points="645.8,424 1300.5,337.5 1541.6,427 1541.6,760.6 886.5,847.4 645.8,756.6"/></clipPath>
<g clip-path="url(#boxclip)" fill="none" stroke="#38ee5e" stroke-width="1.5" stroke-opacity="0.75"><polygon points="645.4,361.5 1300.5,274 1542.6,364.5 886.5,450.5"/>
<path d="M645.4 361.5 V757.3 L886.5 848.5 L1542.6 761.4 V364.5 M886.5 450.5 V848 M1300.5 274 V337"/>
</g>
<!-- origin marker -->
<rect x="762.5" y="584" width="4" height="36" fill="#5c6c7c"/>
<polygon points="736,624 742,626 742,632 736,630" fill="#5c6c7c"/>
<polygon points="741,617 756,615.5 774.5,623 774.5,656.5 759.5,658.5 741,651.5" fill="#263e91"/><polygon points="741,617 756,615.5 774.5,623 759.5,625" fill="#1f388a"/>
<polygon points="741,617 759.5,625 759.5,658.5 741,651.5" fill="#273f93"/>
<polygon points="759.5,625 774.5,623 774.5,656.5 759.5,658.5" fill="#253d8f"/>
<!-- triad -->
<rect x="309" y="1044" width="2.4" height="16" fill="#3a3a3a"/>
<polygon points="320,1064 331,1063.2 331,1065.4 320,1066.6" fill="#3a3a3a"/>
<polygon points="296.5,1062 299.5,1063.5 299.5,1065 296.5,1063.6" fill="#3a3a3a"/>
<polygon points="299.3,1060.5 309,1058.8 320.7,1060.5 320.7,1075.5 308,1077.8 299.3,1074.5" fill="#2a8f2a"/>
<polygon points="299.3,1060.5 309,1058.8 320.7,1060.5 310,1062.3" fill="#238523"/>
<g font-family="Liberation Sans, sans-serif" font-size="10" font-weight="bold" fill="#000">
<text x="310.5" y="1036" textLength="8" lengthAdjust="spacingAndGlyphs">Z</text>
<text x="292.5" y="1062" textLength="8.5" lengthAdjust="spacingAndGlyphs">Y</text>
<text x="336.5" y="1064.3" textLength="8.5" lengthAdjust="spacingAndGlyphs">X</text>
</g>
<defs><linearGradient id="gwr" x1="0" x2="1" y1="0" y2="0"><stop offset="0" stop-color="#3a0000"/><stop offset=".25" stop-color="#ff3a3a" stop-opacity=".85"/><stop offset=".5" stop-color="#ff3a3a"/><stop offset=".75" stop-color="#ff3a3a" stop-opacity=".85"/><stop offset="1" stop-color="#3a0000"/></linearGradient><linearGradient id="gwrv" x1="0" x2="0" y1="0" y2="1"><stop offset="0" stop-color="#3a0000"/><stop offset=".25" stop-color="#ff3a3a" stop-opacity=".85"/><stop offset=".5" stop-color="#ff3a3a"/><stop offset=".75" stop-color="#ff3a3a" stop-opacity=".85"/><stop offset="1" stop-color="#3a0000"/></linearGradient><linearGradient id="gwy" x1="0" x2="1" y1="0" y2="0"><stop offset="0" stop-color="#3a3a00"/><stop offset=".25" stop-color="#ffff30" stop-opacity=".85"/><stop offset=".5" stop-color="#ffff30"/><stop offset=".75" stop-color="#ffff30" stop-opacity=".85"/><stop offset="1" stop-color="#3a3a00"/></linearGradient><linearGradient id="gwyv" x1="0" x2="0" y1="0" y2="1"><stop offset="0" stop-color="#3a3a00"/><stop offset=".25" stop-color="#ffff30" stop-opacity=".85"/><stop offset=".5" stop-color="#ffff30"/><stop offset=".75" stop-color="#ffff30" stop-opacity=".85"/><stop offset="1" stop-color="#3a3a00"/></linearGradient><linearGradient id="gwb" x1="0" x2="1" y1="0" y2="0"><stop offset="0" stop-color="#00003a"/><stop offset=".25" stop-color="#3a4aff" stop-opacity=".85"/><stop offset=".5" stop-color="#3a4aff"/><stop offset=".75" stop-color="#3a4aff" stop-opacity=".85"/><stop offset="1" stop-color="#00003a"/></linearGradient><linearGradient id="gwbv" x1="0" x2="0" y1="0" y2="1"><stop offset="0" stop-color="#00003a"/><stop offset=".25" stop-color="#3a4aff" stop-opacity=".85"/><stop offset=".5" stop-color="#3a4aff"/><stop offset=".75" stop-color="#3a4aff" stop-opacity=".85"/><stop offset="1" stop-color="#00003a"/></linearGradient><linearGradient id="gsh" x1="0" x2="0" y1="0" y2="1"><stop offset="0" stop-color="#000" stop-opacity=".55"/><stop offset=".3" stop-color="#000" stop-opacity="0"/><stop offset=".7" stop-color="#000" stop-opacity="0"/><stop offset="1" stop-color="#000" stop-opacity=".55"/></linearGradient><linearGradient id="gshv" x1="0" x2="1" y1="0" y2="0"><stop offset="0" stop-color="#000" stop-opacity=".45"/><stop offset=".3" stop-color="#000" stop-opacity="0"/><stop offset=".7" stop-color="#000" stop-opacity="0"/><stop offset="1" stop-color="#000" stop-opacity=".55"/></linearGradient><clipPath id="pieclip"><path d="M230 1070 H263 V1114 H300 V1142 H230 Z"/></clipPath></defs><path d="M261.5 956 V1005.5 H245" fill="none" stroke="#333" stroke-width="1"/><rect x="246" y="956" width="14" height="48" fill="#000"/><rect x="247.5" y="957.5" width="11" height="45" fill="url(#gwyv)"/><rect x="248" y="957.9" width="10" height="1" fill="#000" opacity="0.21"/><rect x="248" y="959.0" width="10" height="1" fill="#000" opacity="0.27"/><rect x="248" y="960.8" width="10" height="1" fill="#000" opacity="0.32"/><rect x="248" y="963.2" width="10" height="1" fill="#000" opacity="0.37"/><rect x="248" y="966.2" width="10" height="1" fill="#000" opacity="0.41"/><rect x="248" y="969.7" width="10" height="1" fill="#000" opacity="0.45"/><rect x="248" y="973.5" width="10" height="1" fill="#000" opacity="0.47"/><rect x="248" y="977.5" width="10" height="1" fill="#000" opacity="0.48"/><rect x="248" y="981.5" width="10" height="1" fill="#000" opacity="0.48"/><rect x="248" y="985.5" width="10" height="1" fill="#000" opacity="0.47"/><rect x="248" y="989.3" width="10" height="1" fill="#000" opacity="0.45"/><rect x="248" y="992.8" width="10" height="1" fill="#000" opacity="0.41"/><rect x="248" y="995.8" width="10" height="1" fill="#000" opacity="0.37"/><rect x="248" y="998.2" width="10" height="1" fill="#000" opacity="0.32"/><rect x="248" y="1000.0" width="10" height="1" fill="#000" opacity="0.27"/><rect x="248" y="1001.1" width="10" height="1" fill="#000" opacity="0.21"/><rect x="247.5" y="957.5" width="11" height="45" fill="url(#gshv)"/><path d="M261.5 1026 V1075.5 H245" fill="none" stroke="#333" stroke-width="1"/><rect x="246" y="1026" width="14" height="48" fill="#000"/><rect x="247.5" y="1027.5" width="11" height="45" fill="url(#gwrv)"/><rect x="248" y="1027.9" width="10" height="1" fill="#fff" opacity="0.35"/><rect x="248" y="1029.0" width="10" height="1" fill="#fff" opacity="0.45"/><rect x="248" y="1030.8" width="10" height="1" fill="#fff" opacity="0.54"/><rect x="248" y="1033.2" width="10" height="1" fill="#fff" opacity="0.62"/><rect x="248" y="1036.2" width="10" height="1" fill="#fff" opacity="0.69"/><rect x="248" y="1039.7" width="10" height="1" fill="#fff" opacity="0.74"/><rect x="248" y="1043.5" width="10" height="1" fill="#fff" opacity="0.78"/><rect x="248" y="1047.5" width="10" height="1" fill="#fff" opacity="0.80"/><rect x="248" y="1051.5" width="10" height="1" fill="#fff" opacity="0.80"/><rect x="248" y="1055.5" width="10" height="1" fill="#fff" opacity="0.78"/><rect x="248" y="1059.3" width="10" height="1" fill="#fff" opacity="0.74"/><rect x="248" y="1062.8" width="10" height="1" fill="#fff" opacity="0.69"/><rect x="248" y="1065.8" width="10" height="1" fill="#fff" opacity="0.62"/><rect x="248" y="1068.2" width="10" height="1" fill="#fff" opacity="0.54"/><rect x="248" y="1070.0" width="10" height="1" fill="#fff" opacity="0.45"/><rect x="248" y="1071.1" width="10" height="1" fill="#fff" opacity="0.35"/><rect x="247.5" y="1027.5" width="11" height="45" fill="url(#gshv)"/><path d="M352.5 1118 V1132.5 H303" fill="none" stroke="#333" stroke-width="1"/><rect x="304" y="1118" width="47" height="13" fill="#000"/><rect x="305.5" y="1119.5" width="44" height="10" fill="url(#gwr)"/><rect x="305.9" y="1120" width="1" height="9" fill="#400" opacity="0.25"/><rect x="307.0" y="1120" width="1" height="9" fill="#400" opacity="0.31"/><rect x="308.7" y="1120" width="1" height="9" fill="#400" opacity="0.38"/><rect x="311.1" y="1120" width="1" height="9" fill="#400" opacity="0.43"/><rect x="314.0" y="1120" width="1" height="9" fill="#400" opacity="0.48"/><rect x="317.4" y="1120" width="1" height="9" fill="#400" opacity="0.52"/><rect x="321.1" y="1120" width="1" height="9" fill="#400" opacity="0.55"/><rect x="325.0" y="1120" width="1" height="9" fill="#400" opacity="0.56"/><rect x="329.0" y="1120" width="1" height="9" fill="#400" opacity="0.56"/><rect x="332.9" y="1120" width="1" height="9" fill="#400" opacity="0.55"/><rect x="336.6" y="1120" width="1" height="9" fill="#400" opacity="0.52"/><rect x="340.0" y="1120" width="1" height="9" fill="#400" opacity="0.48"/><rect x="342.9" y="1120" width="1" height="9" fill="#400" opacity="0.43"/><rect x="345.3" y="1120" width="1" height="9" fill="#400" opacity="0.38"/><rect x="347.0" y="1120" width="1" height="9" fill="#400" opacity="0.31"/><rect x="348.1" y="1120" width="1" height="9" fill="#400" opacity="0.25"/><rect x="305.5" y="1119.5" width="44" height="10" fill="url(#gsh)"/><path d="M422.5 1118 V1132.5 H373" fill="none" stroke="#333" stroke-width="1"/><rect x="374" y="1118" width="47" height="13" fill="#000"/><rect x="375.5" y="1119.5" width="44" height="10" fill="url(#gwy)"/><rect x="375.9" y="1120" width="1" height="9" fill="#000" opacity="0.21"/><rect x="377.0" y="1120" width="1" height="9" fill="#000" opacity="0.27"/><rect x="378.7" y="1120" width="1" height="9" fill="#000" opacity="0.32"/><rect x="381.1" y="1120" width="1" height="9" fill="#000" opacity="0.37"/><rect x="384.0" y="1120" width="1" height="9" fill="#000" opacity="0.41"/><rect x="387.4" y="1120" width="1" height="9" fill="#000" opacity="0.45"/><rect x="391.1" y="1120" width="1" height="9" fill="#000" opacity="0.47"/><rect x="395.0" y="1120" width="1" height="9" fill="#000" opacity="0.48"/><rect x="399.0" y="1120" width="1" height="9" fill="#000" opacity="0.48"/><rect x="402.9" y="1120" width="1" height="9" fill="#000" opacity="0.47"/><rect x="406.6" y="1120" width="1" height="9" fill="#000" opacity="0.45"/><rect x="410.0" y="1120" width="1" height="9" fill="#000" opacity="0.41"/><rect x="412.9" y="1120" width="1" height="9" fill="#000" opacity="0.37"/><rect x="415.3" y="1120" width="1" height="9" fill="#000" opacity="0.32"/><rect x="417.0" y="1120" width="1" height="9" fill="#000" opacity="0.27"/><rect x="418.1" y="1120" width="1" height="9" fill="#000" opacity="0.21"/><rect x="375.5" y="1119.5" width="44" height="10" fill="url(#gsh)"/><path d="M492.5 1118 V1132.5 H443" fill="none" stroke="#333" stroke-width="1"/><rect x="444" y="1118" width="47" height="13" fill="#000"/><rect x="445.5" y="1119.5" width="44" height="10" fill="url(#gwb)"/><rect x="445.9" y="1120" width="1" height="9" fill="#fff" opacity="0.35"/><rect x="447.0" y="1120" width="1" height="9" fill="#fff" opacity="0.45"/><rect x="448.7" y="1120" width="1" height="9" fill="#fff" opacity="0.54"/><rect x="451.1" y="1120" width="1" height="9" fill="#fff" opacity="0.62"/><rect x="454.0" y="1120" width="1" height="9" fill="#fff" opacity="0.69"/><rect x="457.4" y="1120" width="1" height="9" fill="#fff" opacity="0.74"/><rect x="461.1" y="1120" width="1" height="9" fill="#fff" opacity="0.78"/><rect x="465.0" y="1120" width="1" height="9" fill="#fff" opacity="0.80"/><rect x="469.0" y="1120" width="1" height="9" fill="#fff" opacity="0.80"/><rect x="472.9" y="1120" width="1" height="9" fill="#fff" opacity="0.78"/><rect x="476.6" y="1120" width="1" height="9" fill="#fff" opacity="0.74"/><rect x="480.0" y="1120" width="1" height="9" fill="#fff" opacity="0.69"/><rect x="482.9" y="1120" width="1" height="9" fill="#fff" opacity="0.62"/><rect x="485.3" y="1120" width="1" height="9" fill="#fff" opacity="0.54"/><rect x="487.0" y="1120" width="1" height="9" fill="#fff" opacity="0.45"/><rect x="488.1" y="1120" width="1" height="9" fill="#fff" opacity="0.35"/><rect x="445.5" y="1119.5" width="44" height="10" fill="url(#gsh)"/><g clip-path="url(#pieclip)"><circle cx="268" cy="1112" r="25" fill="none" stroke="#333" stroke-width="1"/><circle cx="267" cy="1111" r="25.5" fill="#000"/><circle cx="267" cy="1111" r="23.3" fill="#ff1010"/><path d="M276.0 1111.0 L288.5 1111.0" stroke="#ff8a6a" stroke-width=".7" opacity=".8"/><path d="M275.9 1112.4 L288.2 1114.4" stroke="#ff8a6a" stroke-width=".7" opacity=".8"/><path d="M275.6 1113.8 L287.4 1117.6" stroke="#ff8a6a" stroke-width=".7" opacity=".8"/><path d="M275.0 1115.1 L286.2 1120.8" stroke="#ff8a6a" stroke-width=".7" opacity=".8"/><path d="M274.3 1116.3 L284.4 1123.6" stroke="#ff8a6a" stroke-width=".7" opacity=".8"/><path d="M273.4 1117.4 L282.2 1126.2" stroke="#ff8a6a" stroke-width=".7" opacity=".8"/><path d="M272.3 1118.3 L279.6 1128.4" stroke="#ff8a6a" stroke-width=".7" opacity=".8"/><path d="M271.1 1119.0 L276.8 1130.2" stroke="#ff8a6a" stroke-width=".7" opacity=".8"/><path d="M269.8 1119.6 L273.6 1131.4" stroke="#ff8a6a" stroke-width=".7" opacity=".8"/><path d="M268.4 1119.9 L270.4 1132.2" stroke="#ff8a6a" stroke-width=".7" opacity=".8"/><path d="M267.0 1120.0 L267.0 1132.5" stroke="#ff8a6a" stroke-width=".7" opacity=".8"/><path d="M265.6 1119.9 L263.6 1132.2" stroke="#ff8a6a" stroke-width=".7" opacity=".8"/><path d="M264.2 1119.6 L260.4 1131.4" stroke="#ff8a6a" stroke-width=".7" opacity=".8"/><path d="M262.9 1119.0 L257.2 1130.2" stroke="#ff8a6a" stroke-width=".7" opacity=".8"/><path d="M261.7 1118.3 L254.4 1128.4" stroke="#ff8a6a" stroke-width=".7" opacity=".8"/><path d="M260.6 1117.4 L251.8 1126.2" stroke="#ff8a6a" stroke-width=".7" opacity=".8"/><path d="M259.7 1116.3 L249.6 1123.6" stroke="#ff8a6a" stroke-width=".7" opacity=".8"/><path d="M259.0 1115.1 L247.8 1120.8" stroke="#ff8a6a" stroke-width=".7" opacity=".8"/><path d="M258.4 1113.8 L246.6 1117.6" stroke="#ff8a6a" stroke-width=".7" opacity=".8"/><path d="M258.1 1112.4 L245.8 1114.4" stroke="#ff8a6a" stroke-width=".7" opacity=".8"/><path d="M258.0 1111.0 L245.5 1111.0" stroke="#ff8a6a" stroke-width=".7" opacity=".8"/><path d="M258.1 1109.6 L245.8 1107.6" stroke="#ff8a6a" stroke-width=".7" opacity=".8"/><path d="M258.4 1108.2 L246.6 1104.4" stroke="#ff8a6a" stroke-width=".7" opacity=".8"/><path d="M259.0 1106.9 L247.8 1101.2" stroke="#ff8a6a" stroke-width=".7" opacity=".8"/><path d="M259.7 1105.7 L249.6 1098.4" stroke="#ff8a6a" stroke-width=".7" opacity=".8"/><path d="M260.6 1104.6 L251.8 1095.8" stroke="#ff8a6a" stroke-width=".7" opacity=".8"/><path d="M261.7 1103.7 L254.4 1093.6" stroke="#ff8a6a" stroke-width=".7" opacity=".8"/><path d="M262.9 1103.0 L257.2 1091.8" stroke="#ff8a6a" stroke-width=".7" opacity=".8"/><path d="M264.2 1102.4 L260.4 1090.6" stroke="#ff8a6a" stroke-width=".7" opacity=".8"/><path d="M265.6 1102.1 L263.6 1089.8" stroke="#ff8a6a" stroke-width=".7" opacity=".8"/><path d="M267.0 1102.0 L267.0 1089.5" stroke="#ff8a6a" stroke-width=".7" opacity=".8"/><path d="M268.4 1102.1 L270.4 1089.8" stroke="#ff8a6a" stroke-width=".7" opacity=".8"/><path d="M269.8 1102.4 L273.6 1090.6" stroke="#ff8a6a" stroke-width=".7" opacity=".8"/><path d="M271.1 1103.0 L276.8 1091.8" stroke="#ff8a6a" stroke-width=".7" opacity=".8"/><path d="M272.3 1103.7 L279.6 1093.6" stroke="#ff8a6a" stroke-width=".7" opacity=".8"/><path d="M273.4 1104.6 L282.2 1095.8" stroke="#ff8a6a" stroke-width=".7" opacity=".8"/><path d="M274.3 1105.7 L284.4 1098.4" stroke="#ff8a6a" stroke-width=".7" opacity=".8"/><path d="M275.0 1106.9 L286.2 1101.2" stroke="#ff8a6a" stroke-width=".7" opacity=".8"/><path d="M275.6 1108.2 L287.4 1104.4" stroke="#ff8a6a" stroke-width=".7" opacity=".8"/><path d="M275.9 1109.6 L288.2 1107.6" stroke="#ff8a6a" stroke-width=".7" opacity=".8"/><circle cx="267" cy="1111" r="24" fill="none" stroke="#a00000" stroke-width="1.5" opacity=".6"/><path d="M263.3 1086 V1114.3 H292" fill="none" stroke="#000" stroke-width="1"/></g><g font-family="Liberation Sans, sans-serif" font-size="6" font-weight="bold" fill="#111" text-anchor="middle"><text x="325.5" y="1139.8" textLength="24.5" lengthAdjust="spacingAndGlyphs">ROTATE</text><text x="397.3" y="1139.8" textLength="13.5" lengthAdjust="spacingAndGlyphs">PAN</text><text x="467.5" y="1139.8" textLength="19" lengthAdjust="spacingAndGlyphs">ZOOM</text></g>
</svg>

<div id="dlg" class="a" style="left:1177px;top:735px;width:536px;height:315px;box-sizing:border-box;border:1px solid #1c2026;border-radius:7px 7px 0 0;background:#f0f0f0;overflow:hidden;">
<div class="a" style="left:0;top:0;width:534px;height:313px;border:1px solid #a8daf4;border-top-color:#e8f1fa;box-sizing:border-box;border-radius:6px 6px 0 0;"></div>
<div class="a" style="left:1px;top:1px;width:532px;height:23px;border-radius:5px 5px 0 0;background:linear-gradient(#dfe9f4 0,#9ab2cf 1px,#97b0cd 5px,#a6c0de 12px,#b3cfeb 23px);"></div><div class="a" style="left:1px;top:1px;width:532px;height:23px;border-radius:5px 5px 0 0;background:linear-gradient(#e6eef7 0,#c8daed 1px,#c2d6eb 6px,#b0cae7 14px,#a8c5e5 23px);-webkit-mask-image:linear-gradient(90deg,#000 0,#000 15%,transparent 85%);mask-image:linear-gradient(90deg,#000 0,#000 15%,transparent 85%);"></div>
<div class="a" style="left:1px;top:24px;width:532px;height:1px;background:#f6f8fa;"></div>
<div class="t" style="left:6px;top:7px;font-size:12px;letter-spacing:-0.17px;">Part Parameters - 'Part set by wizard'</div>
<!-- close button -->
<div class="a" style="left:499px;top:4px;width:31px;height:17px;box-sizing:border-box;border:1px solid #5a1d14;border-radius:3px;background:linear-gradient(#e8aaa0 0,#d9877a 45%,#c4402a 50%,#c8533a 80%,#dc8a60 100%);box-shadow:inset 0 0 0 1px rgba(255,255,255,.45);"></div>
<svg class="a" style="left:508px;top:7px;" width="14" height="11" viewBox="0 0 14 11"><path d="M3 2.300 L11 8.900 M11 2.300 L3 8.900" stroke="#4a3030" stroke-width="3.600" stroke-linecap="butt"/><path d="M3.600 2.800 L10.400 8.400 M10.400 2.800 L3.600 8.400" stroke="#fff" stroke-width="2.100" stroke-linecap="butt"/></svg>
<!-- tab page -->
<div class="a" style="left:8px;top:51px;width:516px;height:223px;box-sizing:border-box;border:1px solid #898c95;background:#fff;"></div>
<div class="tab" style="left:10px;width:49px;">General</div>
<div class="tab" style="left:59px;width:61px;">Transform</div>
<div class="tab" style="left:120px;width:49px;">Support</div>
<div class="tab" style="left:226px;width:49px;">Ambient</div>
<div class="tab" style="left:275px;width:55px;">Translate</div>
<div class="tab sel" style="left:168px;width:59px;">Segment</div>
<!-- groups -->
<div class="grp" style="left:20px;top:71px;width:495px;height:168px;"></div>
<div class="t" style="left:26px;top:66px;background:#fff;padding:0 2px;">Main segment (size of the material block)</div>
<div class="grp" style="left:273px;top:83px;width:230px;height:145px;"></div>
<div class="t" style="left:279px;top:78px;background:#fff;padding:0 2px;">Boundaries</div>
<!-- radios -->
<div class="radio" style="left:38px;top:91px;"><i></i></div>
<div class="radio" style="left:38px;top:117px;"></div>
<div class="radio" style="left:38px;top:143px;"></div>
<div class="t" style="left:53px;top:92px;">Use whole geometry</div>
<div class="t" style="left:53px;top:118px;">Use upper half of geometry</div>
<div class="t" style="left:53px;top:144px;">Custom</div>
<div class="btn" style="left:79px;top:163px;width:109px;height:21px;">Set graphically...</div>
<!-- boundaries -->
<div class="t" style="left:320px;top:94px;letter-spacing:-0.55px !important;">Minimum</div>
<div class="t" style="left:398px;top:94px;letter-spacing:-0.45px !important;">Maximum</div>
<div class="t" style="left:290px;top:115px;">X</div>
<div class="t" style="left:290px;top:138px;">Y</div>
<div class="t" style="left:290px;top:161px;">Z</div>
<div class="t" style="left:290px;top:183px;color:#9a9a9a;">A</div>
<div class="inp" style="left:318px;top:110px;">0.00</div>
<div class="inp" style="left:396px;top:110px;">37.33</div>
<div class="inp" style="left:318px;top:133px;height:19px;">-11.50</div>
<div class="inp" style="left:396px;top:133px;height:19px;">11.50</div>
<div class="inp" style="left:318px;top:156px;height:19px;">-8.37</div>
<div class="inp" style="left:396px;top:156px;height:19px;">8.37</div>
<div class="inp" style="left:318px;top:178px;height:19px;">0.00</div>
<div class="inp" style="left:396px;top:178px;height:19px;">360.00</div>
<div class="t" style="left:462px;top:115px;">mm</div>
<div class="t" style="left:462px;top:138px;">mm</div>
<div class="t" style="left:462px;top:161px;">mm</div>
<div class="t" style="left:462px;top:183px;color:#9a9a9a;">degr.</div>
<div class="a" style="left:290px;top:208px;width:13px;height:13px;box-sizing:border-box;border:1px solid #8e8f8f;background:linear-gradient(135deg,#d6d6d6,#f9f9f9);box-shadow:inset 0 0 0 1px #f4f4f4;"></div>
<div class="t" style="left:306px;top:209px;">Display translated coordinates</div>
<div class="t" style="left:32px;top:244px;">The area to be machined can also limited by the subsegment, to be defined per operation.</div>
<!-- buttons -->
<div class="btn def" style="left:209px;top:282px;width:73px;height:21px;">OK</div>
<div class="btn" style="left:290px;top:282px;width:73px;height:21px;">Отмена</div>
<div class="btn" style="left:371px;top:282px;width:73px;height:21px;">Применить</div>
<div class="btn" style="left:452px;top:282px;width:73px;height:21px;">Справка</div>
</div>
<!-- cursor -->
<svg class="a" style="left:1274px;top:838px;" width="14" height="22" viewBox="0 0 14 22"><path d="M1 1 L1 17 L4.8 13.5 L7.6 20 L10 19 L7.2 12.6 L12 12.4 Z" fill="#fff" stroke="#000" stroke-width="1"/></svg>

<div id="statusbar" class="a"></div>
<!--STATUS-->
<div id="taskbar" class="a"></div>
<div class="a" style="left:0;top:1141px;width:1920px;height:1px;background:#8a8a8a;"></div>
<div class="a" style="left:0;top:1142px;width:1920px;height:1px;background:#fff;"></div>
<div class="t" style="left:2px;top:1147px;">For Help, press F1</div>
<div class="t" style="left:1090px;top:1147px;letter-spacing:.25px;">Machine: STRIZH</div>
<div class="t" style="left:1388px;top:1147px;letter-spacing:.28px;">Rotation: 0.00/0.00/0.00</div>
<div class="a" style="left:1383px;top:1144px;width:1px;height:15px;background:#d0d0d0;"></div>
<div class="a" style="left:1856px;top:1144px;width:1px;height:15px;background:#d0d0d0;"></div>
<div class="a" style="left:0;top:1160px;width:1920px;height:1px;background:#4b586b;"></div>
<div class="a" style="left:0;top:1161px;width:1920px;height:1px;background:rgba(255,255,255,.35);"></div>
<!-- start orb -->
<div class="a" style="left:10px;top:1163px;width:34px;height:34px;border-radius:50%;background:radial-gradient(circle at 50% 108%,#6fe6ff 0,#25a8de 24%,#10609f 48%,#1a4f88 64%,#2a5a90 100%);box-shadow:0 0 0 1px rgba(35,60,100,.8),0 0 3px 1px rgba(200,220,240,.35);"></div>
<div class="a" style="left:11px;top:1164px;width:32px;height:17px;border-radius:16px 16px 0 0 / 16px 16px 0 0;background:linear-gradient(rgba(235,242,250,.75) 0,rgba(200,215,235,.45) 60%,rgba(170,195,225,.25) 100%);"></div>
<svg class="a" style="left:17px;top:1169px;" width="22" height="22" viewBox="0 0 22 22">
<path d="M3 3.500 Q6.500 1.500 10 3.200 L8.700 10 Q5.300 8.400 1.500 10.200 Z" fill="#e8632b"/>
<path d="M11.300 3.800 Q15 5.500 19.500 3.200 L18 10 Q14 12 10 10.400 Z" fill="#8cc63f"/>
<path d="M1.200 11.500 Q5 9.800 8.400 11.400 L7 18.200 Q3.500 16.600 0 18.300 Z" fill="#3aa3e3"/>
<path d="M9.700 11.900 Q13.500 13.600 17.700 11.400 L16.300 18.200 Q12.300 20.300 8.300 18.600 Z" fill="#f9c21c"/>
</svg>
<!-- IE -->
<svg class="a" style="left:72px;top:1162px;" width="38" height="36" viewBox="0 0 38 36">
<path d="M27.12 24.84 A10.3 10.3 0 1 1 29.3 18.9 H9.7" fill="none" stroke="#1e86c4" stroke-width="6" stroke-linejoin="round"/><path d="M27.12 24.84 A10.3 10.3 0 1 1 29.3 18.9 H9.7" fill="none" stroke="#52c4f0" stroke-width="4.500" stroke-linejoin="round"/>
<path d="M3.500 31.500 C0.500 23 10.500 7.500 27.500 3 C30.500 2.300 33 3 32 6.500 C31 3.800 27 5 23 7 C13 12 5.800 22.500 6.300 29 C6.500 32 4.500 33.500 3.500 31.500 Z" fill="#f6c82c" stroke="#e0a818" stroke-width=".5"/>
</svg>
<!-- Explorer button -->
<div class="tbb" style="left:122px;width:58px;"></div>
<svg class="a" style="left:135px;top:1166px;" width="34" height="32" viewBox="0 0 34 32">
<path d="M1 4 L1 27 L26 27 L26 6 L12 6 L10 3 L2 3 Z" fill="#f3d583" stroke="#dcb45a" stroke-width="1"/>
<path d="M8 8 L8 28 L32 28 L32 10 L19 10 L17 7 L9 7 Z" fill="#f8df98" stroke="#dcb45a" stroke-width="1"/>
<rect x="3" y="4" width="3" height="2" fill="#3aa63a"/><rect x="11" y="6" width="3" height="2" fill="#c94f2a"/><rect x="19" y="8.5" width="3" height="2" fill="#3a78c9"/>
<path d="M5 19 L29 19 L29 30 L23 30 L23 24 L11 24 L11 30 L5 30 Z" fill="#7fc0ea" stroke="#5ba3d6" stroke-width="1"/>
<rect x="6" y="20" width="22" height="2" fill="#b8e0f7"/>
</svg>
<!-- Sticky notes -->
<svg class="a" style="left:195px;top:1167px;opacity:.95;" width="36" height="30" viewBox="0 0 38 32">
<polygon points="6,4 20,1 24,17 9,21" fill="#b4dea0"/>
<polygon points="10,8 24,8 24,24 10,24" fill="#c2dcf4"/>
<polygon points="14,8 32,4 35,22 20,28" fill="#f8e07c"/>
</svg>
<!-- Firefox 1 -->
<svg class="a ff" style="left:257px;top:1161px;" width="36" height="36" viewBox="0 0 36 36"><use href="#ffx"/></svg>
<!-- Skype -->
<div class="tbb" style="left:308px;width:58px;"></div>
<div class="a" style="left:324px;top:1167px;width:26px;height:26px;border-radius:50%;background:radial-gradient(circle at 40% 30%,#4fd0ff 0,#12aaf0 60%,#0b94dc 100%);"></div>
<div class="a" style="left:321px;top:1164px;width:16px;height:16px;border-radius:50%;background:#2ab8f5;"></div>
<div class="a" style="left:337px;top:1181px;width:16px;height:16px;border-radius:50%;background:#10a2ea;"></div>
<div class="t" style="left:329px;top:1168px;font-size:24px;font-weight:bold;color:#fff;">S</div>
<!-- Rhino (black) -->
<div class="tbb" style="left:370px;width:58px;"></div>
<div class="a" style="left:383px;top:1164px;width:32px;height:32px;background:#080808;"></div>
<svg class="a" style="left:383px;top:1164px;" width="32" height="32" viewBox="0 0 32 32">
<defs><linearGradient id="rh1" x1="0" y1="0" x2="1" y2="1"><stop offset="0" stop-color="#f0f0f0"/><stop offset=".6" stop-color="#bdbdbd"/><stop offset="1" stop-color="#6a6a6a"/></linearGradient>
<linearGradient id="rh2" x1="0" y1="0" x2="1" y2="1"><stop offset="0" stop-color="#e2e2e2"/><stop offset=".55" stop-color="#a8a8a8"/><stop offset="1" stop-color="#4a4a4a"/></linearGradient></defs>
<polygon points="20,15.500 32,9.500 32,15 24,23" fill="#5a5a5a"/>
<path d="M0 0 H9 L10.500 2.500 C12 6 15 9 18 9.500 L22.500 8.500 C22 11.500 20 13 17 13.500 L12 14 C9 14.500 6 16 3.500 19 L0 16 Z" fill="url(#rh1)"/>
<path d="M0.500 8 C4 7.500 7.500 5.500 9.500 2.500" fill="none" stroke="#3a3a3a" stroke-width="1.100"/>
<path d="M2 14.500 L5.500 13 L9 15 L6 18 Z" fill="#2a1a1e"/><path d="M4.500 13.800 L7.500 14.800" stroke="#c08a90" stroke-width=".8"/>
<path d="M4 20 C8 14 17 14 20.500 18 C24 22.500 23.500 27.500 20.500 31 L16 31 C14.500 27 9 25.500 4 22.500 Z" fill="url(#rh2)"/>
<path d="M4 22.500 C9 25.500 14.500 27 16 31" fill="none" stroke="#efefef" stroke-width=".9"/>
</svg>
<!-- Irfanview -->
<div class="tbb" style="left:432px;width:54px;"></div>
<div class="a" style="left:485px;top:1161px;width:5px;height:38px;box-sizing:border-box;border:1px solid rgba(70,88,115,.75);border-left:none;border-radius:0 3px 3px 0;background:rgba(255,255,255,.3);"></div>
<svg class="a" style="left:441.800px;top:1164.800px;" width="34" height="32" viewBox="0 0 34 32">
<polygon points="1,3.400 4.700,6.100 7.400,3.400 9.500,0.700 12.200,6.800 15.600,4.700 16.600,1.700 19.600,1.200 21.300,3.400 20.600,6.800 19,9.500 20.300,12.200 24.400,13.500 28.400,12.900 31.800,14.200 32.200,16.900 29.100,17.900 25,17.600 23.700,19 22.300,21.700 20.300,25 20,29.100 17.600,30.800 13.500,30.500 12.200,27.800 13.500,23.700 12.200,20.300 8.800,17.600 4.100,18.600 0.700,17.600 0,14.900 2.700,13.200 7.400,12.900 6.400,9.500" fill="#f80808"/>
<path d="M25.800 19.500 C23.500 21.500 24 25 27.500 25.300 L31 24.800" fill="none" stroke="#f80808" stroke-width="2.300" stroke-linecap="round"/>
<polygon points="4.700,6.100 7.400,3.400 9.500,0.700 11.700,6.300 10,8.800 6.400,9" fill="#3a1214"/>
<rect x="6.300" y="6.300" width="1" height="1" fill="#fff"/><rect x="9" y="5.300" width="1" height="1" fill="#fff"/>
</svg>
<!-- Firefox 2 -->
<div class="tbb" style="left:494px;width:58px;"></div>
<svg class="a ff" style="left:506px;top:1162px;" width="36" height="36" viewBox="0 0 36 36">
<defs>
<radialGradient id="ffo" cx=".3" cy=".35" r=".8"><stop offset="0" stop-color="#ffc23a"/><stop offset=".45" stop-color="#f07a18"/><stop offset="1" stop-color="#c2380c"/></radialGradient>
<radialGradient id="ffg" cx=".4" cy=".3" r=".75"><stop offset="0" stop-color="#9adcff"/><stop offset=".45" stop-color="#2f7fd8"/><stop offset="1" stop-color="#142f8a"/></radialGradient>
<g id="ffx">
<circle cx="18" cy="18" r="15.300" fill="url(#ffo)"/>
<circle cx="20" cy="14.500" r="10.300" fill="url(#ffg)"/>
<path d="M17 6 C19 8 18 10 20 11 C23 12 24 15 22 17 C25 16 27 13 26 10 C24 7 20 5 17 6 Z" fill="#5aa8e8" opacity=".6"/>
<path d="M2.800 16 C2.800 10 7 6 11 4.800 C10 7 10.500 9 12 10 C14 9.500 16 10 17 11.500 C15 12 13.500 13.500 13.500 15.500 C13.500 18 15.500 19.500 18 19.500 C17 22 14 23 11.500 22 C13 25 17 27 21.500 26 C27 24.800 30.500 20.500 30.500 16 C30.500 13 29.500 10.500 28 8.500 C31.500 11 33.500 15 33.300 19 C33 27.500 26 33.600 18 33.400 C9 33.200 2.800 25 2.800 16 Z" fill="url(#ffo)"/>
<path d="M11.500 22 C13 25 17 27 21.500 26 C27 24.800 30.500 20.500 30.500 16 C31.500 22 27 29 20 29.500 C15 29.800 12 26 11.500 22 Z" fill="#d84a10" opacity=".75"/>
<path d="M12 10 C14 9.500 16 10 17 11.500 C15 12 13.500 13.500 13.500 15.500 C11.500 15 10.500 12.500 12 10 Z" fill="#ffd84a"/>
</g></defs><use href="#ffx"/></svg>
<!-- Photoshop -->
<div class="tbb" style="left:556px;width:58px;"></div>
<svg class="a" style="left:568px;top:1165px;" width="34" height="30" viewBox="0 0 34 30">
<polygon points="2,2 30,0 30,27 2,29" fill="#0d4c94"/>
<polygon points="3,2 30,0 30,26 6,27 3,26" fill="#0f5aa6"/>
<polygon points="2,2 6,3 6,28 2,29" fill="#0a3b78"/>
</svg>
<div class="t" style="left:577px;top:1170px;font-size:16px;font-weight:bold;color:#8fd4ff;letter-spacing:-0.8px;">Ps</div>
<!-- DeskProto active -->
<div class="tbb act" style="left:618px;width:58px;"></div>
<div class="t" style="left:631px;top:1160px;font-family:'Liberation Serif',serif;font-style:italic;font-weight:bold;font-size:25px;color:#d8300f;letter-spacing:-4px;">DP</div>
<div class="t" style="left:644px;top:1182px;font-family:'Liberation Serif',serif;font-style:italic;font-size:9px;color:#c0392b;line-height:7px;white-space:normal;width:24px;letter-spacing:-0.4px;">Desk Proto</div>
<!-- tray -->
<div class="t" style="left:1697px;top:1171px;font-size:12px;color:#fff;letter-spacing:-1px;">RU</div>
<svg class="a" style="left:1727px;top:1178px;" width="10" height="6"><path d="M0.5 5.5 L5 0.5 L9.5 5.5 Z" fill="#fff" stroke="#dfe7f2" stroke-width=".5"/></svg>
<svg class="a" style="left:1748px;top:1172px;" width="20" height="18" viewBox="0 0 20 18">
<rect x="1.5" y="1" width="1.6" height="15" fill="#fff"/><path d="M3.5 2 C6 0.5 8 3.5 11 2 L11 8.5 C8 10 6 7 3.5 8.5 Z" fill="#fff"/>
<circle cx="12.5" cy="11.5" r="4.6" fill="#e03a3a" stroke="#fff" stroke-width=".8"/><path d="M10.6 9.6 L14.4 13.4 M14.4 9.6 L10.6 13.4" stroke="#fff" stroke-width="1.5"/>
</svg>
<svg class="a" style="left:1773px;top:1174px;" width="17" height="14" viewBox="0 0 17 14">
<g fill="#fff"><rect x="0.5" y="10" width="2" height="3"/><rect x="3.7" y="8" width="2" height="5"/><rect x="6.9" y="6" width="2" height="7"/><rect x="10.1" y="3.5" width="2" height="9.5"/><rect x="13.3" y="1" width="2" height="12"/></g>
</svg>
<svg class="a" style="left:1797px;top:1173px;" width="18" height="16" viewBox="0 0 18 16">
<path d="M1 5.5 L4 5.5 L8 1.5 L8 14.5 L4 10.5 L1 10.5 Z" fill="#fff"/>
<path d="M10 5 Q11.8 8 10 11 M12 3.2 Q15 8 12 12.8 M14 1.8 Q18 8 14 14.2" fill="none" stroke="#fff" stroke-width="1.1"/>
</svg>
<div class="t" style="left:1845px;top:1167px;font-size:12px;color:#fff;letter-spacing:-0.6px;">17:57</div>
<div class="t" style="left:1830px;top:1184px;font-size:12px;color:#fff;letter-spacing:-0.55px;">13.07.2012</div>
<div class="a" style="left:1897px;top:1161px;width:23px;height:39px;box-sizing:border-box;border:1px solid #4f5d72;border-right:none;background:linear-gradient(135deg,#93a6c0 0,#7f93b0 45%,#6d819f 55%,#8093ae 100%);box-shadow:inset 1px 1px 0 rgba(255,255,255,.4);"></div>

</body>
</html>
